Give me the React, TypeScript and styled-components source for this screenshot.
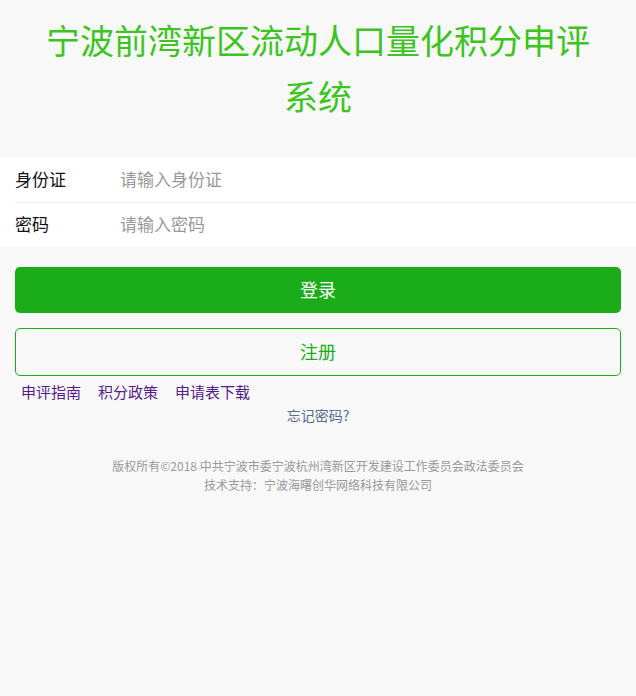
import React from "react";
import styled, { createGlobalStyle } from "styled-components";

const Global = createGlobalStyle`
  html, body { margin: 0; padding: 0; background: #f8f8f8; }
  body {
    font-family: "Noto Sans CJK SC", "Noto Sans", sans-serif;
    -webkit-font-smoothing: antialiased;
  }
  * { box-sizing: border-box; }
`;

const Page = styled.div`
  min-height: 696px;
  background: #f8f8f8;
`;

const Header = styled.header`
  padding: 12px 30px 34px;
`;

const Title = styled.h1`
  margin: 0;
  font-size: 34px;
  font-weight: 400;
  line-height: 56px;
  color: #3cc51f;
  text-align: center;
`;

const Cells = styled.div`
  background: #fff;
`;

const Cell = styled.label<{ $divider?: boolean }>`
  display: flex;
  align-items: center;
  height: ${(p) => (p.$divider ? 45 : 44)}px;
  padding: 0 15px ${(p) => (p.$divider ? 4 : 3)}px;
  position: relative;
  ${(p) =>
    p.$divider
      ? `&::after { content: ""; position: absolute; left: 15px; right: 0; bottom: 0; height: 1px; background: #eeeeee; }`
      : ""}
`;

const Label = styled.span`
  width: 105px;
  flex-shrink: 0;
  font-size: 17px;
  color: #111;
`;

const Input = styled.input`
  flex: 1;
  border: 0;
  outline: 0;
  background: transparent;
  font-family: inherit;
  font-size: 17px;
  color: #000;
  padding: 0;
  &::placeholder { color: #999; }
`;

const Actions = styled.div`
  padding: 20px 15px 0;
  display: flex;
  flex-direction: column;
  gap: 15px;
`;

const Button = styled.button<{ $primary?: boolean }>`
  display: block;
  width: 100%;
  height: ${(p) => (p.$primary ? 46 : 48)}px;
  padding: 0 0 3px;
  border-radius: 5px;
  font-family: inherit;
  font-size: 18px;
  cursor: pointer;
  border: ${(p) => (p.$primary ? "0" : "1px solid #1aad19")};
  background: ${(p) => (p.$primary ? "#1aad19" : "transparent")};
  color: ${(p) => (p.$primary ? "#fff" : "#1aad19")};
`;

const Links = styled.div`
  display: flex;
  gap: 17px;
  padding: 5px 21px 0;
`;

const Link = styled.a`
  font-size: 15px;
  line-height: 21px;
  color: #551a8b;
  text-decoration: none;
`;

const Forgot = styled.a`
  display: block;
  text-align: center;
  font-size: 14px;
  line-height: 20px;
  margin-top: 3px;
  color: #586c94;
  text-decoration: none;
`;

const Footer = styled.footer`
  margin-top: 31px;
  text-align: center;
  font-size: 12px;
  line-height: 19px;
  color: #999;
`;

export default function App() {
  return (
    <Page>
      <Global />
      <Header>
        <Title>宁波前湾新区流动人口量化积分申评系统</Title>
      </Header>
      <Cells>
        <Cell $divider>
          <Label>身份证</Label>
          <Input placeholder="请输入身份证" />
        </Cell>
        <Cell>
          <Label>密码</Label>
          <Input type="password" placeholder="请输入密码" />
        </Cell>
      </Cells>
      <Actions>
        <Button $primary>登录</Button>
        <Button>注册</Button>
      </Actions>
      <Links>
        <Link href="#">申评指南</Link>
        <Link href="#">积分政策</Link>
        <Link href="#">申请表下载</Link>
      </Links>
      <Forgot href="#">忘记密码?</Forgot>
      <Footer>
        <div>版权所有©2018 中共宁波市委宁波杭州湾新区开发建设工作委员会政法委员会</div>
        <div>技术支持：宁波海曙创华网络科技有限公司</div>
      </Footer>
    </Page>
  );
}
